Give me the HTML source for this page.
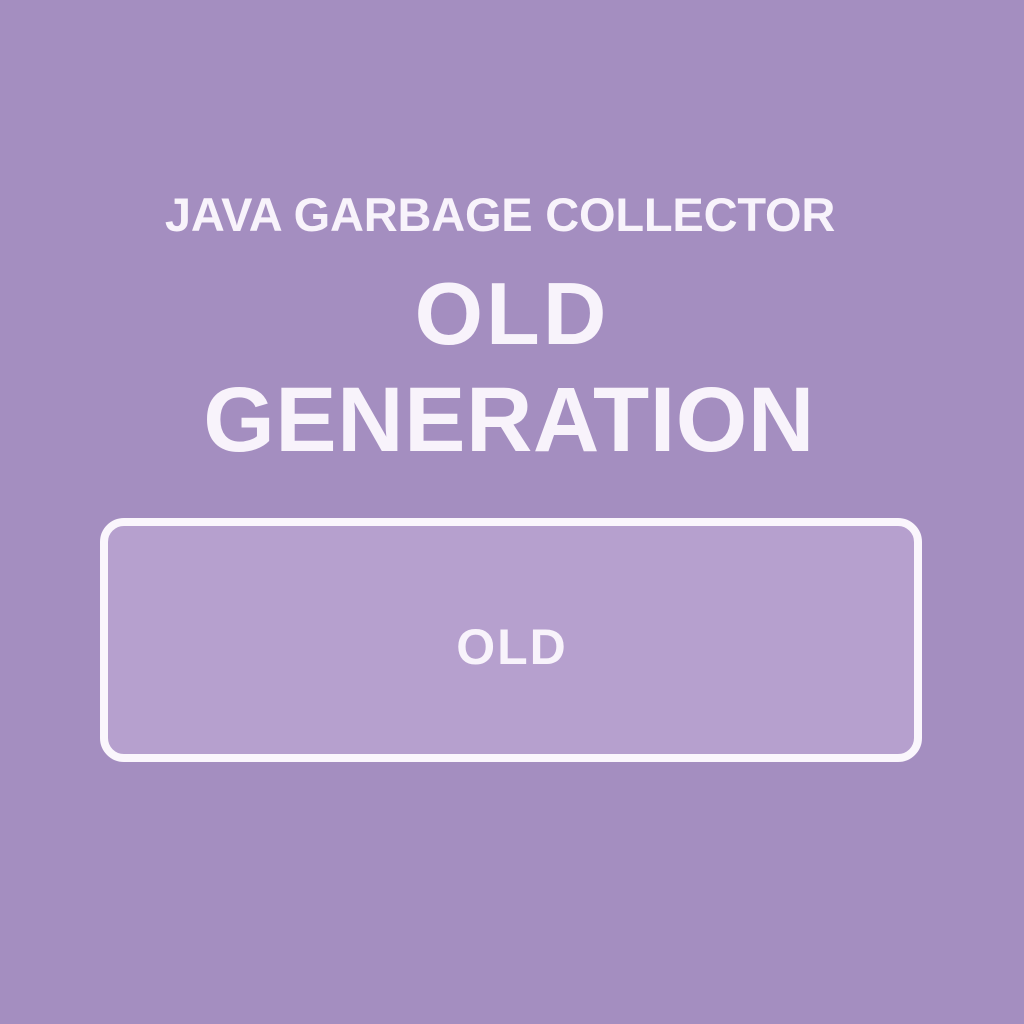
<!DOCTYPE html>
<html><head><style>
html,body{margin:0;padding:0}
body{width:1024px;height:1024px;background:#a48ec0;position:relative;overflow:hidden;font-family:"Liberation Sans","DejaVu Sans",sans-serif;color:#f8f3fb;font-weight:bold}
.t{position:absolute;left:0;width:1024px;text-align:center;white-space:nowrap}
.box{position:absolute;left:100px;top:518px;width:806px;height:228px;border:8px solid #faf6fc;border-radius:24px;background:#b6a0ce}
</style></head><body>
<div class="t" style="top:187px;left:-12px;font-size:47px;letter-spacing:-0.2px">JAVA GARBAGE COLLECTOR</div>
<div class="t" style="top:263px;font-size:88px;letter-spacing:3px">OLD</div>
<div class="t" style="top:368px;left:-3px;font-size:92px;letter-spacing:0.5px">GENERATION</div>
<div class="box"></div>
<div class="t" style="top:618px;font-size:50px;letter-spacing:2px">OLD</div>
</body></html>
